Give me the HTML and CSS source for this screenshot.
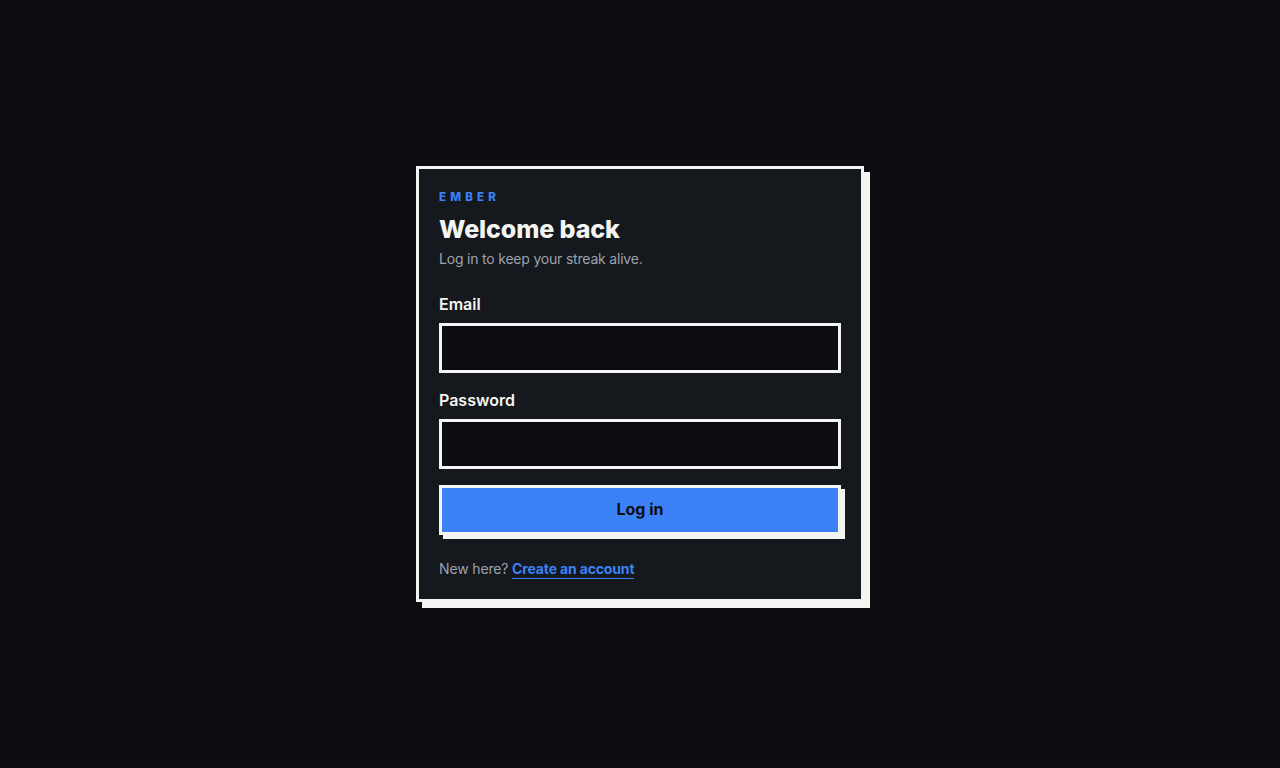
FILE: index.html
```html
<!DOCTYPE html>
<html lang="en">
<head>
<meta charset="utf-8">
<title>Ember — Log in</title>
<link rel="stylesheet" href="styles.css">
</head>
<body>
<main class="page">
  <form class="card">
    <div class="brand">EMBER</div>
    <h1 class="title">Welcome back</h1>
    <p class="subtitle">Log in to keep your streak alive.</p>
    <label class="label" for="email">Email</label>
    <input class="input" id="email" type="email">
    <label class="label label-gap" for="password">Password</label>
    <input class="input" id="password" type="password">
    <button class="btn" type="button">Log in</button>
    <p class="footer">New here? <a class="link" href="#">Create an account</a></p>
  </form>
</main>
</body>
</html>
```

FILE: styles.css
```css
* { box-sizing: border-box; }
html, body { margin: 0; padding: 0; }
body {
  background: #0c0e11;
  font-family: Inter, "Liberation Sans", sans-serif;
  color: #f4f5f2;
}
.page {
  width: 1280px;
  height: 768px;
  display: flex;
  align-items: flex-start;
  justify-content: center;
  padding-top: 166px;
}
.card {
  width: 448px;
  background: #15181c;
  border: 3px solid #f4f5f2;
  box-shadow: 6px 6px 0 #f4f5f2;
  padding: 20px 20px 20px;
  display: flex;
  flex-direction: column;
}
.brand {
  color: #3b82f6;
  font-size: 11.5px;
  font-weight: 800;
  letter-spacing: 4.2px;
  line-height: 16px;
}
.title {
  margin: 9px 0 0;
  font-size: 25px;
  font-weight: 800;
  line-height: 30px;
  letter-spacing: -0.1px;
  color: #f4f5f2;
}
.subtitle {
  margin: 5px 0 0;
  font-size: 14px;
  line-height: 20px;
  color: #9ca3af;
  letter-spacing: -0.2px;
}
.label {
  margin-top: 24px;
  font-size: 16px;
  font-weight: 600;
  line-height: 22px;
  color: #f4f5f2;
}
.label-gap { margin-top: 16px; }
.input {
  margin-top: 8px;
  height: 50px;
  width: 100%;
  background: #0c0d10;
  border: 3px solid #f4f5f2;
  border-radius: 0;
  color: #f4f5f2;
  font: inherit;
  padding: 0 12px;
  outline: none;
}
.btn {
  margin-top: 16px;
  height: 50px;
  width: 100%;
  background: #3b82f6;
  border: 3px solid #f4f5f2;
  border-radius: 0;
  box-shadow: 4px 4px 0 #f4f5f2;
  color: #0c0e11;
  font-family: inherit;
  font-size: 16px;
  font-weight: 700;
  line-height: 20px;
  padding: 0 0 2px;
  cursor: pointer;
}
.footer {
  margin: 24px 0 0;
  font-size: 14px;
  line-height: 20px;
  color: #9ca3af;
  letter-spacing: -0.15px;
}
.link {
  color: #3b82f6;
  font-weight: 700;
  text-decoration: none;
  border-bottom: 1px solid #3b82f6;
  padding-bottom: 1px;
}
```
